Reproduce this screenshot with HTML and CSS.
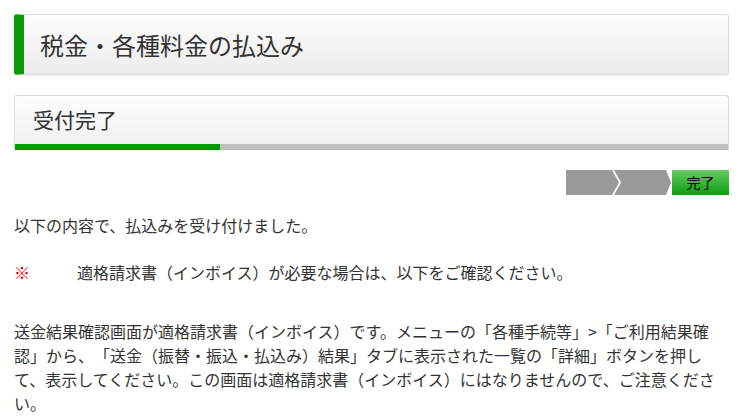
FILE: index.html
```html
<!DOCTYPE html>
<html lang="ja">
<head>
    <meta charset="UTF-8">
    <meta name="viewport" content="width=device-width, initial-scale=1.0">
    <title>税金・各種料金の払込み</title>
    <link rel="stylesheet" href="styles.css">
</head>
<body>
    <div class="page">
        <h1 class="page-title">税金・各種料金の払込み</h1>

        <div class="step-head">
            <h2 class="step-title">受付完了</h2>
            <div class="progress"><div class="progress-bar"></div></div>
        </div>

        <div class="steps">
            <svg class="steps-done" width="106" height="25" viewBox="0 0 106 25">
                <polygon points="0,0 46,0 53,12.5 46,25 0,25" fill="#9a9a9a"/>
                <polygon points="48,0 100,0 105,12.5 100,25 48,25 55,12.5" fill="#9a9a9a"/>
            </svg>
            <div class="step-current">完了</div>
        </div>

        <p class="message">以下の内容で、払込みを受け付けました。</p>

        <p class="notice"><span class="mark">※</span>適格請求書（インボイス）が必要な場合は、以下をご確認ください。</p>

        <p class="detail">送金結果確認画面が適格請求書（インボイス）です。メニューの「各種手続等」&gt;「ご利用結果確認」から、「送金（振替・振込・払込み）結果」タブに表示された一覧の「詳細」ボタンを押して、表示してください。この画面は適格請求書（インボイス）にはなりませんので、ご注意ください。</p>
    </div>
</body>
</html>
```

FILE: styles.css
```css
body {
    margin: 0;
    background-color: #fff;
    color: #333;
    font-family: "Noto Sans CJK JP", "Noto Sans", sans-serif;
    text-spacing-trim: space-all;
}

.page {
    width: 715px;
    padding: 14px 15px 0 14px;
}

.page-title {
    margin: 0;
    height: 59px;
    line-height: 59px;
    padding-left: 16px;
    font-size: 24px;
    font-weight: normal;
    background: linear-gradient(#fdfdfd, #ececec);
    border: 1px solid #dcdcdc;
    border-left: 10px solid #0a9a0a;
    border-radius: 3px;
    box-shadow: 0 1px 2px rgba(0, 0, 0, 0.06);
}

.step-head {
    margin-top: 20px;
    background: linear-gradient(#fdfdfd, #efefef);
    border: 1px solid #dcdcdc;
    border-bottom: none;
    border-radius: 3px 3px 0 0;
    box-shadow: 0 1px 2px rgba(0, 0, 0, 0.06);
}

.step-title {
    margin: 0;
    height: 48px;
    line-height: 46px;
    padding-left: 18px;
    font-size: 21px;
    font-weight: normal;
}

.progress {
    height: 6px;
    background-color: #bebebe;
}

.progress-bar {
    width: 205px;
    height: 100%;
    background-color: #009a00;
}

.steps {
    display: flex;
    justify-content: flex-end;
    margin-top: 20px;
}

.steps-done {
    display: block;
}

.step-current {
    width: 57px;
    height: 25px;
    line-height: 25px;
    text-align: center;
    font-size: 14px;
    color: #000;
    background: linear-gradient(#66cc66, #0e9e0e);
}

.message {
    margin: 18px 0 0;
    font-size: 16px;
    line-height: 24px;
}

.notice {
    margin: 23px 0 0;
    font-size: 16px;
    line-height: 24px;
}

.mark {
    display: inline-block;
    width: 63px;
    color: #d00;
}

.detail {
    margin: 35px 0 0;
    font-size: 16px;
    line-height: 24px;
}
```
